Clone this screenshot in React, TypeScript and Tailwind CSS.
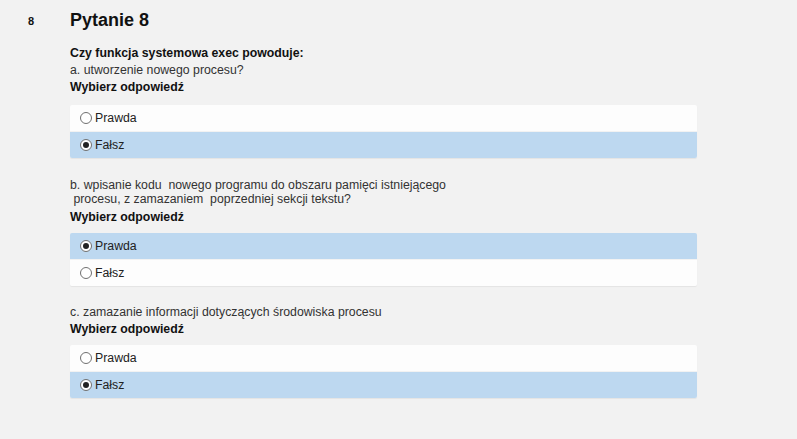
import React from "react";

type Opt = { label: string; checked: boolean };

function Radio({ checked }: { checked: boolean }) {
  return (
    <span className="inline-flex h-[12px] w-[12px] items-center justify-center rounded-full border border-[#707070] bg-white">
      {checked && <span className="h-[6px] w-[6px] rounded-full bg-[#222]" />}
    </span>
  );
}

function Options({ opts }: { opts: Opt[] }) {
  return (
    <div className="flex w-[627px] flex-col gap-px rounded-[2px] shadow-[0_1px_1px_rgba(0,0,0,0.06)]">
      {opts.map((o, i) => (
        <div
          key={i}
          className={`flex h-[26px] items-center gap-[3px] pl-[10px] ${
            o.checked ? "bg-[#bdd8f0]" : "bg-[#fdfdfd]"
          } ${i === 0 ? "rounded-t-[2px]" : "rounded-b-[2px]"}`}
        >
          <Radio checked={o.checked} />
          <span className="text-[12.3px] text-[#222]">{o.label}</span>
        </div>
      ))}
    </div>
  );
}

export default function App() {
  return (
    <div
      className="min-h-[439px] w-full bg-[#f2f2f2] text-[#222]"
      style={{ fontFamily: '"Liberation Sans", Arial, sans-serif' }}
    >
      <div className="flex pt-[9px]">
        <div className="w-[70px] pl-[28px] pt-[4px] text-[11px] font-bold text-[#111]">8</div>
        <div className="flex flex-col">
          <h1 className="text-[18px] font-bold leading-[22px] text-[#111]">Pytanie 8</h1>
          <div className="mt-[14px] text-[12.3px] leading-[17px]">
            <div className="font-bold text-[#111]">Czy funkcja systemowa exec powoduje:</div>
            <div className="text-[#333]">a. utworzenie nowego procesu?</div>
            <div className="font-bold text-[#111]">Wybierz odpowiedź</div>
          </div>
          <div className="mt-[9px]">
            <Options opts={[{ label: "Prawda", checked: false }, { label: "Fałsz", checked: true }]} />
          </div>
          <div className="mt-[20px] whitespace-pre-wrap text-[12.3px] leading-[14px] text-[#333]">
            {"b. wpisanie kodu  nowego programu do obszaru pamięci istniejącego\n procesu, z zamazaniem  poprzedniej sekcji tekstu?"}
          </div>
          <div className="mt-[3px] text-[12.3px] font-bold leading-[17px] text-[#111]">Wybierz odpowiedź</div>
          <div className="mt-[7px]">
            <Options opts={[{ label: "Prawda", checked: true }, { label: "Fałsz", checked: false }]} />
          </div>
          <div className="mt-[18px] text-[12.3px] leading-[17px]">
            <div className="text-[#333]">c. zamazanie informacji dotyczących środowiska procesu</div>
            <div className="font-bold text-[#111]">Wybierz odpowiedź</div>
          </div>
          <div className="mt-[7px]">
            <Options opts={[{ label: "Prawda", checked: false }, { label: "Fałsz", checked: true }]} />
          </div>
        </div>
      </div>
    </div>
  );
}
